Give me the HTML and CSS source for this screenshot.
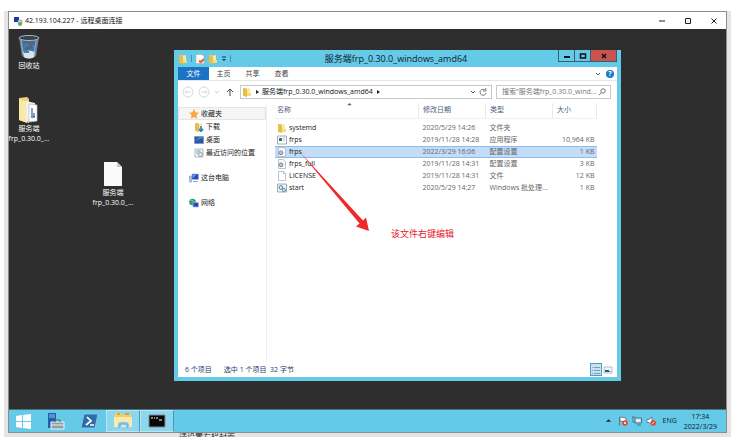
FILE: index.html
```html
<!DOCTYPE html>
<html lang="zh-CN">
<head>
<meta charset="utf-8">
<title>远程桌面连接</title>
<link rel="stylesheet" href="styles.css">
</head>
<body>
<svg class="defs" aria-hidden="true">
  <symbol id="folder" viewBox="0 0 10 10"><path d="M1 1h4v8H1z" fill="#f0cf62"/><path d="M4 2l4-1v8H4z" fill="#fbe9a0"/><path d="M1 1l4 1.500V10L1 9z" fill="#e9bd4a"/><path d="M5 6h4v3H5z" fill="#f6dc80"/></symbol>
  <symbol id="page" viewBox="0 0 10 10"><path d="M1.500.5h5l2 2v7h-7z" fill="#fff" stroke="#a9adb2" stroke-width=".7"/><path d="M6.500.5v2h2" fill="none" stroke="#a9adb2" stroke-width=".7"/></symbol>
  <symbol id="gear" viewBox="0 0 10 10"><path d="M1.500.5h5l2 2v7h-7z" fill="#fafbfc" stroke="#a3abb3" stroke-width=".7"/><circle cx="4" cy="5.800" r="1.900" fill="#dfe5e9" stroke="#71828e"/><circle cx="4" cy="5.800" r=".6" fill="#64727c"/></symbol>
  <symbol id="batch" viewBox="0 0 10 10"><path d="M.5 1h9v8h-9z" fill="#edf4f8" stroke="#8199a8" stroke-width=".8"/><circle cx="4" cy="4.500" r="1.800" fill="none" stroke="#54758b"/><circle cx="7" cy="7" r="1.500" fill="none" stroke="#6493b0"/></symbol>
  <symbol id="computer" viewBox="0 0 10 10"><path d="M3 1h6.500v5.500H3z" fill="#2447c8" stroke="#a4b6d5" stroke-width=".7"/><path d="M4 2h3L4 5z" fill="#779bf0"/><path d="M4 8h5v1H4z" fill="#8fa3bd"/><path d="M.5 3h2v6h-2z" fill="#bccbdd" stroke="#6d83a1" stroke-width=".5"/></symbol>
</svg>
<main class="frame">
  <section class="remote">
    <header class="remote-bar">
      <svg class="ico" viewBox="0 0 10 10"><path d="M1 1h5v5H1z" fill="#2136a8"/><path d="M5 4h4v4H5z" fill="#c5d1dd" stroke="#788897" stroke-width=".5"/><circle cx="7" cy="8" r="2" fill="#6caf4c"/></svg>
      <span class="remote-title">42.193.104.227 - 远程桌面连接</span>
      <button class="remote-btn" aria-label="最小化"><svg viewBox="0 0 8 8"><path d="M1 4h6"/></svg></button>
      <button class="remote-btn" aria-label="最大化"><svg viewBox="0 0 8 8"><path d="M1.500 1.500h5v5h-5z"/></svg></button>
      <button class="remote-btn" aria-label="关闭"><svg viewBox="0 0 8 8"><path d="M1.500 1.500l5 5m0-5l-5 5"/></svg></button>
    </header>

    <div class="desktop">
      <div class="shortcut bin">
        <svg viewBox="0 0 26 26"><path d="M3 3l3 19c3 3 11 3 14 0l3-19z" fill="#708494"/><path d="M6 5l2 13c3 2 7 2 10 0l2-13z" fill="#52677a"/><path d="M7 18c4-2 8-2 12 0l-1 5c-3 2-7 2-10 0z" fill="#dce3e8"/><ellipse cx="13" cy="4" rx="10" ry="2.500" fill="#33424e" stroke="#a8b8c5"/><path d="M8 14l2-4 3 2m4-1l2 4-4 1m-2 2H9l-1-3" fill="none" stroke="#2e83dc" stroke-width="1.800"/><path d="M5 6l2 14M20 6l-2 14" stroke="#9db0bf" stroke-width=".8"/></svg>
        <span>回收站</span>
      </div>
      <div class="shortcut folder">
        <svg viewBox="0 0 26 26"><path d="M3 1l8-1 2 2v24L3 23z" fill="#ecd47e"/><path d="M3 2l8 3v21l-8-3z" fill="#fae9a6"/><path d="M10 4l9 2v17l-9 1z" fill="#eef0f2"/><path d="M13 7l8 1v16l-8 1z" fill="#fff" stroke="#b9bdc2" stroke-width=".7"/><path d="M16 11v8m2-3v4m-3 0h4" stroke="#496c9b" stroke-width="1.300"/></svg>
        <span>服务端<br>frp_0.30.0_...</span>
      </div>
      <div class="shortcut file">
        <svg viewBox="0 0 26 26"><path d="M4 1h13l5 5v19H4z" fill="#fafafa"/><path d="M17 1v5h5z" fill="#c6c6c6"/></svg>
        <span>服务端<br>frp_0.30.0_...</span>
      </div>

      <section class="explorer">
        <header class="titlebar">
          <div class="quick">
            <svg class="ico"><use href="#folder"/></svg><i></i>
            <svg class="ico" viewBox="0 0 10 10"><path d="M1 .5h6l2 2v7H1z" fill="#fff" stroke="#b8a9a2" stroke-width=".6"/><path d="M4 7l2 1 3-3" fill="none" stroke="#e35b32" stroke-width="2"/></svg>
            <svg class="ico"><use href="#folder"/></svg>
            <svg class="drop" viewBox="0 0 6 8"><path d="M1 2h4" stroke="#24323a"/><path d="M1 4h4L3 6z" fill="#24323a"/></svg><i></i>
          </div>
          <h1>服务端frp_0.30.0_windows_amd64</h1>
          <div class="caption">
            <button aria-label="最小化"><svg viewBox="0 0 8 8"><path d="M1 5h6" stroke-width="2"/></svg></button>
            <button aria-label="最大化"><svg viewBox="0 0 8 8"><path d="M1.500 2h5v4h-5z" stroke-width="1.500"/></svg></button>
            <button class="close" aria-label="关闭"><svg viewBox="0 0 8 8"><path d="M2 2l4 4m0-4L2 6" stroke-width="1.500"/></svg></button>
          </div>
        </header>
        <div class="client">
          <nav class="tabs">
            <button class="active">文件</button><button>主页</button><button>共享</button><button>查看</button>
            <span class="grow"></span>
            <svg class="chev" viewBox="0 0 6 6"><path d="M1 2l2 2 2-2"/></svg>
            <button class="help" aria-label="帮助">?</button>
          </nav>
          <div class="address">
            <button class="nav-btn" aria-label="后退"><svg viewBox="0 0 12 12"><circle cx="6" cy="6" r="5"/><path d="M9 6H3m2-2L3 6l2 2"/></svg></button>
            <button class="nav-btn" aria-label="前进"><svg viewBox="0 0 12 12"><circle cx="6" cy="6" r="5"/><path d="M3 6h6M7 4l2 2-2 2"/></svg></button>
            <svg class="chev pale" viewBox="0 0 6 6"><path d="M1 2l2 2 2-2"/></svg>
            <button class="nav-btn up" aria-label="上移"><svg viewBox="0 0 12 12"><path d="M6 10V3M3 6l3-3 3 3"/></svg></button>
            <div class="path">
              <svg class="ico"><use href="#folder"/></svg>
              <svg class="tri" viewBox="0 0 4 6"><path d="M1 1l3 2-3 2z"/></svg>
              <span>服务端frp_0.30.0_windows_amd64</span>
              <svg class="tri" viewBox="0 0 4 6"><path d="M1 1l3 2-3 2z"/></svg>
              <span class="grow"></span>
              <svg class="chev" viewBox="0 0 6 6"><path d="M1 2l2 2 2-2"/></svg>
              <svg class="refresh" viewBox="0 0 8 8"><path d="M6.500 2.500A3 3 0 1 0 7 5M6.800 0v3H4"/></svg>
            </div>
            <label class="search">
              <input type="text" aria-label="搜索" placeholder="搜索&quot;服务端frp_0.30.0_wind...">
              <svg class="refresh" viewBox="0 0 8 8"><circle cx="5" cy="3" r="2.200"/><path d="M3.400 4.600L.8 7.300"/></svg>
            </label>
          </div>
          <div class="body">
            <nav class="side">
              <a class="fav" href="#"><svg class="ico" viewBox="0 0 10 10"><path d="M5 0l1.500 3.300L10 3.700 7.400 6.100l.7 3.700L5 8 1.900 9.800l.7-3.700L0 3.700l3.500-.4z" fill="#f9a63a"/></svg>收藏夹</a>
              <a class="sub" href="#"><svg class="ico" viewBox="0 0 10 10"><use href="#folder"/><path d="M7 4v5M5 7l2 2.500L9 7" fill="none" stroke="#2587d8" stroke-width="1.600"/></svg>下载</a>
              <a class="sub" href="#"><svg class="ico" viewBox="0 0 10 10"><path d="M.5 1.500h9v7h-9z" fill="#2759a6" stroke="#7991b4" stroke-width=".7"/><path d="M1 6l4-4h4v1z" fill="#4a83cc"/></svg>桌面</a>
              <a class="sub" href="#"><svg class="ico" viewBox="0 0 10 10"><path d="M1 1h8v8H1z" fill="#eef2f5" stroke="#93a6b5" stroke-width=".7"/><path d="M2.500 3h4m-4 2h2" stroke="#7590a5"/><circle cx="6.500" cy="6.500" r="2" fill="#dff1fb" stroke="#5f88a5" stroke-width=".7"/></svg>最近访问的位置</a>
              <a class="root" href="#"><svg class="ico"><use href="#computer"/></svg>这台电脑</a>
              <a class="root" href="#"><svg class="ico" viewBox="0 0 10 10"><circle cx="3.500" cy="4" r="3.300" fill="#2fa064"/><path d="M1 2c3 0 4 2 5 4" stroke="#74d3e8" fill="none"/><path d="M4 4.500h5.500V9H4z" fill="#2447c8" stroke="#a4b6d5" stroke-width=".7"/></svg>网络</a>
            </nav>
            <div class="list">
              <table>
                <colgroup><col><col class="c-date"><col class="c-type"><col class="c-size"></colgroup>
                <thead><tr><th>名称<svg class="sort" viewBox="0 0 6 4"><path d="M3 0l3 3H0z"/></svg></th><th>修改日期</th><th>类型</th><th>大小</th></tr></thead>
                <tbody>
                  <tr><td><svg class="ico"><use href="#folder"/></svg>systemd</td><td>2020/5/29 14:26</td><td>文件夹</td><td></td></tr>
                  <tr><td><svg class="ico" viewBox="0 0 10 10"><path d="M.5 1h9v8h-9z" fill="#fff" stroke="#8c959c" stroke-width=".8"/><path d="M2 3h3v3H2z" fill="#217d68"/><path d="M6 3h2M6 5h2" stroke="#abb"/></svg>frps</td><td>2019/11/28 14:28</td><td>应用程序</td><td>10,964 KB</td></tr>
                  <tr class="sel"><td><svg class="ico"><use href="#gear"/></svg>frps</td><td>2022/3/29 16:06</td><td>配置设置</td><td>1 KB</td></tr>
                  <tr><td><svg class="ico"><use href="#gear"/></svg>frps_full</td><td>2019/11/28 14:31</td><td>配置设置</td><td>3 KB</td></tr>
                  <tr><td><svg class="ico"><use href="#page"/></svg>LICENSE</td><td>2019/11/28 14:31</td><td>文件</td><td>12 KB</td></tr>
                  <tr><td><svg class="ico"><use href="#batch"/></svg>start</td><td>2020/5/29 14:27</td><td>Windows 批处理...</td><td>1 KB</td></tr>
                </tbody>
              </table>
            </div>
          </div>
          <footer class="status">
            <span>6 个项目</span><span>选中 1 个项目&nbsp; 32 字节</span><span class="grow"></span>
            <div class="views">
              <button class="view on" aria-label="详细信息"><svg viewBox="0 0 10 10"><path d="M1 2.500h1m1 0h6M1 5.500h1m1 0h6M1 8.500h1m1 0h6" stroke="#7f9fb2"/></svg></button>
              <button class="view" aria-label="大图标"><svg viewBox="0 0 10 10"><path d="M1 2h8v6H1z" fill="#eef7fc" stroke="#9bb4c3" stroke-width=".8"/><path d="M2 5h4v2H2z" fill="#1c5c74"/><path d="M6 6h2v1H6z" fill="#66a6c4"/></svg></button>
            </div>
          </footer>
        </div>
      </section>

      <svg class="arrow" viewBox="0 0 74 82"><path d="M1 1L61.500 73.500 58 76.500 71 81 68 67.500 65 70.500z" fill="#ee2b2b"/></svg>
      <p class="note">该文件右键编辑</p>
    </div>

    <footer class="taskbar">
      <button class="task" aria-label="开始"><svg viewBox="0 0 20 18"><path d="M2 4l6-1v6H2zM9 3l8-1v7H9zM2 10h6v6l-6-1zM9 10h8v7l-8-1z" fill="#fff"/></svg></button>
      <button class="task" aria-label="服务器管理器"><svg viewBox="0 0 20 18"><path d="M3 1h8v15H3z" fill="#1d62a8"/><path d="M4 3h6M4 5h6" stroke="#8ec4ed"/><path d="M6 10h13v7H6z" fill="#8fa0ab" stroke="#eef5f8"/><path d="M10 10V8h5v2" fill="none" stroke="#56656f"/><path d="M6 13h13" stroke="#e7eff3"/></svg></button>
      <button class="task" aria-label="PowerShell"><svg viewBox="0 0 20 18"><path d="M5 2h14l-3 14H2z" fill="#2c6da8" stroke="#8bbfe0"/><path d="M8 5l4 4-5 4m4 0h4" fill="none" stroke="#fff" stroke-width="1.700"/></svg></button>
      <button class="task open" aria-label="文件资源管理器"><svg viewBox="0 0 20 18"><path d="M1 3l2-2h5l1 1h9v13H1z" fill="#f0cf68"/><path d="M4 2h3M12 2h4" stroke="#bc7936"/><path d="M1 5h18v10H1z" fill="#fbeaaa"/><path d="M5 17v-4q0-3 3-3h5q3 0 3 3v4h-3v-3q0-1-1-1H9q-1 0-1 1v3z" fill="#73bde5" stroke="#b5e0f5" stroke-width=".7"/></svg></button>
      <button class="task open" aria-label="命令提示符"><svg viewBox="0 0 20 18"><path d="M2 3h16v12H2z" fill="#080808" stroke="#858b8f"/><path d="M4 6h2M7 6h1M9 6h2M12 8h3" stroke="#fff"/></svg></button>
      <span class="grow"></span>
      <svg class="tri tray-up" viewBox="0 0 6 6"><path d="M0 4l3-3 3 3z"/></svg>
      <svg class="tray" viewBox="0 0 10 10"><path d="M1.500 1v9M2 1l6 1v4L2 5z" fill="#fff" stroke="#596d78" stroke-width=".8"/><circle cx="7" cy="7" r="2.800" fill="#df493b"/><path d="M6 6l2 2m0-2L6 8" stroke="#fff" stroke-width=".8"/></svg>
      <svg class="tray" viewBox="0 0 10 10"><path d="M3 2h6.500v5H3zM5 9h4M1 1v5h2M0 1h3" fill="#b7dded" stroke="#3c6c82" stroke-width=".9"/><path d="M4.500 3.500h3v2h-3z" fill="#fff"/></svg>
      <svg class="tray" viewBox="0 0 10 10"><path d="M1 3.500h2L6 1v8L3 6.500H1z" fill="#fff" stroke="#596d78" stroke-width=".8"/><circle cx="7.200" cy="7" r="2.800" fill="#df493b"/><path d="M6 8.200l2.400-2.400" stroke="#fff" stroke-width=".8"/></svg>
      <span class="lang">ENG</span>
      <time class="clock">17:34<br>2022/3/29</time>
    </footer>
  </section>
  <p class="below">请设置左栏封面</p>
</main>
</body>
</html>
```
FILE: styles.css
```css
* { box-sizing: border-box; }
body {
  margin: 0;
  height: 100vh;
  padding: 11px 6px 2px 4px;
  background: #fff;
  color: #222;
  font: 7px/12px "Open Sans", "Noto Sans CJK SC", sans-serif;
  overflow: hidden;
}
button {
  margin: 0;
  padding: 0;
  border: 0;
  background: none;
  color: inherit;
  font: inherit;
}
svg { display: block; flex: none; }
.defs { position: absolute; width: 0; height: 0; }
.ico { width: 10px; height: 10px; }
.grow { flex: 1; }

.frame {
  display: flex;
  flex-direction: column;
  height: 100%;
  padding: 0 4px;
  background: #e5e5e5;
}
.remote {
  flex: 1;
  min-height: 0;
  display: flex;
  flex-direction: column;
  border: 1px solid #8c8c8c;
}
.remote-bar {
  display: flex;
  align-items: center;
  height: 17px;
  padding-left: 4px;
  gap: 2px;
  background: #fff;
}
.remote-title { flex: 1; color: #111; }
.remote-btn { width: 24px; display: flex; justify-content: center; }
.remote-btn svg { width: 8px; height: 8px; fill: none; stroke: #222; }

.desktop {
  position: relative;
  flex: 1;
  min-height: 0;
  background: #2e2e2e;
}
.shortcut {
  position: absolute;
  width: 44px;
  display: flex;
  flex-direction: column;
  align-items: center;
  color: #fff;
  line-height: 10px;
  text-align: center;
  white-space: nowrap;
}
.shortcut svg { width: 26px; height: 28px; }
.shortcut.bin { left: -2px; top: 4px; }
.shortcut.folder { left: -2px; top: 67px; }
.shortcut.file { left: 82px; top: 131px; }

.explorer {
  position: absolute;
  left: 165px;
  right: 105px;
  top: 21px;
  bottom: 28px;
  display: flex;
  flex-direction: column;
  padding: 0 4px 4px;
  background: #65cae8;
}
.titlebar { display: flex; height: 17px; }
.quick { display: flex; align-items: center; gap: 3px; width: 56px; }
.quick i { width: 1px; height: 7px; background: #4796b0; }
.drop { width: 6px; height: 8px; }
.titlebar h1 {
  flex: 1;
  margin: 0;
  color: #102026;
  font-size: 9px;
  font-weight: 400;
  line-height: 17px;
  text-align: center;
}
.caption { display: flex; height: 12px; border: 1px solid #35606f; border-top: 0; }
.caption button {
  width: 16px;
  display: flex;
  align-items: center;
  justify-content: center;
  border-right: 1px solid #35606f;
}
.caption svg { width: 8px; height: 8px; fill: none; stroke: #111; }
.caption .close { width: 25px; border-right: 0; background: #c7544f; }

.client {
  flex: 1;
  min-height: 0;
  display: flex;
  flex-direction: column;
  background: #fff;
}
.tabs { display: flex; align-items: center; height: 13px; color: #444; }
.tabs button { width: 29px; height: 13px; }
.tabs .active { width: 31px; background: #1c72c4; color: #fff; }
.tabs .help {
  width: 8px;
  height: 8px;
  margin: 0 3px 0 5px;
  border-radius: 50%;
  background: #1979ca;
  color: #fff;
  font-weight: 700;
  line-height: 8px;
}
.chev { width: 6px; height: 6px; fill: none; stroke: #555; }
.chev.pale { stroke: #ccc; }
.address {
  display: flex;
  align-items: center;
  gap: 4px;
  height: 23px;
  padding: 0 6px 0 4px;
  border-top: 1px solid #e4e6e8;
}
.nav-btn svg { width: 12px; height: 12px; fill: none; stroke: #d7dade; }
.nav-btn.up svg { stroke: #444; }
.path, .search {
  display: flex;
  align-items: center;
  height: 14px;
  border: 1px solid #c6c8ca;
}
.path { flex: 1; gap: 3px; padding: 0 4px 0 1px; color: #111; }
.path span { white-space: nowrap; }
.tri { width: 4px; height: 6px; fill: #222; }
.refresh { width: 8px; height: 8px; fill: none; stroke: #777; }
.search { width: 115px; padding: 0 4px 0 5px; }
.search input {
  flex: 1;
  min-width: 0;
  padding: 0;
  border: 0;
  outline: 0;
  background: none;
  font: inherit;
}
.search input::placeholder { color: #777; opacity: 1; }

.body { flex: 1; min-height: 0; display: flex; }
.side {
  width: 89px;
  padding-top: 4px;
  border-right: 1px solid #f0f0f0;
}
.side a {
  display: flex;
  align-items: center;
  gap: 2px;
  height: 13px;
  color: #222;
  text-decoration: none;
  white-space: nowrap;
}
.side .fav { padding-left: 10px; border: 1px solid #e4e4e4; background: #f5f5f5; }
.side .sub { padding-left: 16px; }
.side .root { margin-top: 12px; padding-left: 11px; }
.list { flex: 1; padding: 0 20px 0 8px; }
table { width: 100%; table-layout: fixed; border-collapse: collapse; }
.c-date, .c-type { width: 67px; }
.c-size { width: 44px; }
th {
  height: 15px;
  padding: 0 0 0 4px;
  border-right: 1px solid #e8eaed;
  border-bottom: 1px solid #f0f1f3;
  color: #4c607a;
  font-weight: 400;
  text-align: left;
}
th:first-child { position: relative; padding-left: 2px; }
th:last-child { padding-left: 4px; }
.sort { position: absolute; left: 50%; top: 0; width: 5px; height: 3px; fill: #4c607a; }
tbody::before { content: ""; display: block; height: 3px; }
td { height: 12px; padding: 0 0 0 4px; color: #666; line-height: 11px; white-space: nowrap; }
td:first-child { display: flex; align-items: center; gap: 2px; padding-left: 2px; color: #222; }
td:last-child { padding-right: 2px; text-align: right; }
.sel td { background: #c3dcf8; box-shadow: inset 0 1px #8fbbe6, inset 0 -1px #8fbbe6; }

.status {
  display: flex;
  align-items: center;
  height: 15px;
  padding: 0 3px 0 7px;
  gap: 12px;
  color: #24406c;
}
.views { display: flex; }
.view { width: 12px; height: 13px; display: flex; align-items: center; justify-content: center; }
.view svg { width: 10px; height: 10px; }
.view.on { background: #c5e4f3; border: 1px solid #4f9cc0; }

.arrow { position: absolute; left: 289px; top: 121px; width: 74px; height: 82px; }
.note {
  position: absolute;
  left: 382px;
  top: 199px;
  margin: 0;
  color: #e8202c;
  font-size: 9px;
}

.taskbar {
  display: flex;
  align-items: center;
  height: 23px;
  padding-right: 9px;
  border-top: 1px solid #47727f;
  background: #65cae8;
  color: #0c2028;
}
.task { display: flex; align-items: center; justify-content: center; width: 34px; height: 22px; }
.task:first-child { width: 29px; }
.task svg { width: 20px; height: 18px; }
.task.open { border: 1px solid #b9e6f4; border-right-color: #4798b4; background: #8ad7ee; }
.tray-up { width: 5px; margin-right: 7px; }
.tray { width: 10px; height: 10px; margin-right: 4px; }
.lang { margin: 0 7px 0 3px; }
.clock { padding-top: 2px; line-height: 10px; text-align: center; }
.below {
  height: 4px;
  margin: 0;
  padding-left: 171px;
  overflow: hidden;
  color: #222;
  font-size: 8px;
  line-height: 8px;
}
```
